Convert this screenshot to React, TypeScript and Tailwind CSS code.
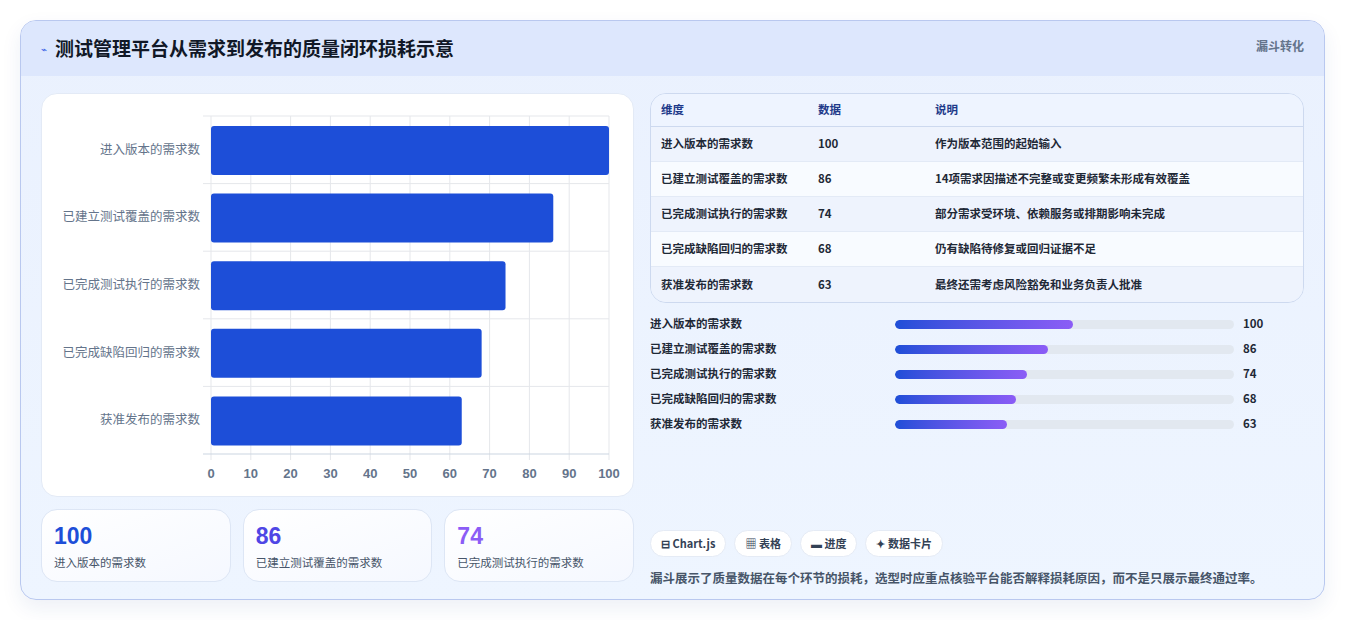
import React from "react";

const rows = [
  ["进入版本的需求数", 100, "作为版本范围的起始输入"],
  ["已建立测试覆盖的需求数", 86, "14项需求因描述不完整或变更频繁未形成有效覆盖"],
  ["已完成测试执行的需求数", 74, "部分需求受环境、依赖服务或排期影响未完成"],
  ["已完成缺陷回归的需求数", 68, "仍有缺陷待修复或回归证据不足"],
  ["获准发布的需求数", 63, "最终还需考虑风险豁免和业务负责人批准"],
] as const;

function Chart() {
  const x0 = 169, w = 398, top = 22, h = 338;
  const band = h / 5;
  return (
    <svg width="593" height="403" className="block">
      {Array.from({ length: 11 }).map((_, i) => (
        <line key={i} x1={x0 + (w * i) / 10} x2={x0 + (w * i) / 10} y1={top} y2={top + h + 6} stroke="#e5e7eb" />
      ))}
      {Array.from({ length: 6 }).map((_, i) => (
        <line key={i} x1={x0 - 8} x2={x0 + w} y1={top + band * i} y2={top + band * i} stroke={i === 5 ? "#cbd5e1" : "#e5e7eb"} />
      ))}
      {rows.map((r, i) => (
        <g key={i}>
          <rect x={x0} y={top + band * i + 10} width={(w * r[1]) / 100} height={49} rx={3} fill="#1d4ed8" />
          <text x={158} y={top + band * i + band / 2 + 4} textAnchor="end" fontSize="12.5" fill="#64748b" fontFamily="'Noto Sans CJK SC', sans-serif">{r[0]}</text>
        </g>
      ))}
      {Array.from({ length: 11 }).map((_, i) => (
        <text key={i} x={x0 + (w * i) / 10} y={384} textAnchor="middle" fontSize="13" fontWeight="600" fill="#64748b" fontFamily="'Liberation Sans', sans-serif">{i * 10}</text>
      ))}
    </svg>
  );
}

export default function App() {
  return (
    <div className="w-[1345px] h-[620px] bg-white pt-5 px-5" style={{ fontFamily: "'Noto Sans CJK SC', 'Noto Sans', sans-serif" }}>
      <div className="h-[580px] rounded-2xl border border-[#b9c8ef] overflow-hidden bg-gradient-to-b from-[#eaf1fe] to-[#eef5ff] shadow-[0_8px_20px_rgba(30,60,140,0.08)]">
        <div className="h-[55px] bg-[#dde7fd] flex items-center justify-between px-5">
          <div className="flex items-center gap-2">
            <span className="text-[#3b63e6] text-[10px]">⌁</span>
            <h1 className="text-[19px] font-bold text-[#111827]">测试管理平台从需求到发布的质量闭环损耗示意</h1>
          </div>
          <div className="text-[12px] font-bold text-[#64748b] self-start mt-4">漏斗转化</div>
        </div>
        <div className="flex gap-4 px-5 pt-[17px]">
          <div className="w-[593px] flex flex-col gap-3">
            <div className="h-[404px] bg-white rounded-2xl border border-[#e3eaf6]"><Chart /></div>
            <div className="flex gap-3">
              {[["100", "#1d4ed8"], ["86", "#4f46e5"], ["74", "#8b5cf6"]].map(([v, c], i) => (
                <div key={i} className="flex-1 h-[73px] rounded-2xl border border-[#dde6f5] bg-gradient-to-br from-white to-[#f5f8ff] px-3 pt-3">
                  <div className="text-[23px] font-extrabold leading-[28px]" style={{ color: c, fontFamily: "'Liberation Sans', sans-serif" }}>{v}</div>
                  <div className="text-[11.5px] text-[#475569] mt-[4px]">{rows[i][0]}</div>
                </div>
              ))}
            </div>
          </div>
          <div className="flex-1 flex flex-col">
            <div className="rounded-2xl border border-[#cdd9ef] overflow-hidden text-[11.5px] font-semibold">
              <div className="h-[33px] flex items-center bg-[#eef4ff] text-[#1e3a8a] border-b border-[#cdd9ef]">
                <div className="w-[167px] pl-[10px]">维度</div><div className="w-[117px]">数据</div><div>说明</div>
              </div>
              {rows.map((r, i) => (
                <div key={i} className={`h-[35px] flex items-center text-[#1f2937] ${i % 2 ? "bg-[#f8fbff]" : "bg-[#eef3fd]"} ${i < 4 ? "border-b border-[#e3eaf6]" : ""}`}>
                  <div className="w-[167px] pl-[10px]">{r[0]}</div><div className="w-[117px]">{r[1]}</div><div>{r[2]}</div>
                </div>
              ))}
            </div>
            <div className="flex flex-col gap-[7px] mt-[12px]">
              {rows.map((r, i) => (
                <div key={i} className="flex items-center h-[18px] text-[11.5px] font-semibold text-[#1f2937]">
                  <div className="w-[245px]">{r[0]}</div>
                  <div className="w-[339px] h-[9px] rounded-full bg-[#e2e8f0] overflow-hidden">
                    <div className="h-full rounded-full bg-gradient-to-r from-[#1d4ed8] to-[#8b5cf6]" style={{ width: `${r[1] * 0.525}%` }} />
                  </div>
                  <div className="ml-[9px]">{r[1]}</div>
                </div>
              ))}
            </div>
            <div className="flex gap-2 mt-[97px] text-[11px] font-bold text-[#334155]">
              {["⊟ Chart.js", "▦ 表格", "▬ 进度", "✦ 数据卡片"].map((t) => (
                <div key={t} className="h-[27px] px-[10px] rounded-full bg-white border border-[#e5ebf5] flex items-center">{t}</div>
              ))}
            </div>
            <div className="mt-[12px] text-[12.5px] text-[#475569] font-semibold">漏斗展示了质量数据在每个环节的损耗，选型时应重点核验平台能否解释损耗原因，而不是只展示最终通过率。</div>
          </div>
        </div>
      </div>
    </div>
  );
}
